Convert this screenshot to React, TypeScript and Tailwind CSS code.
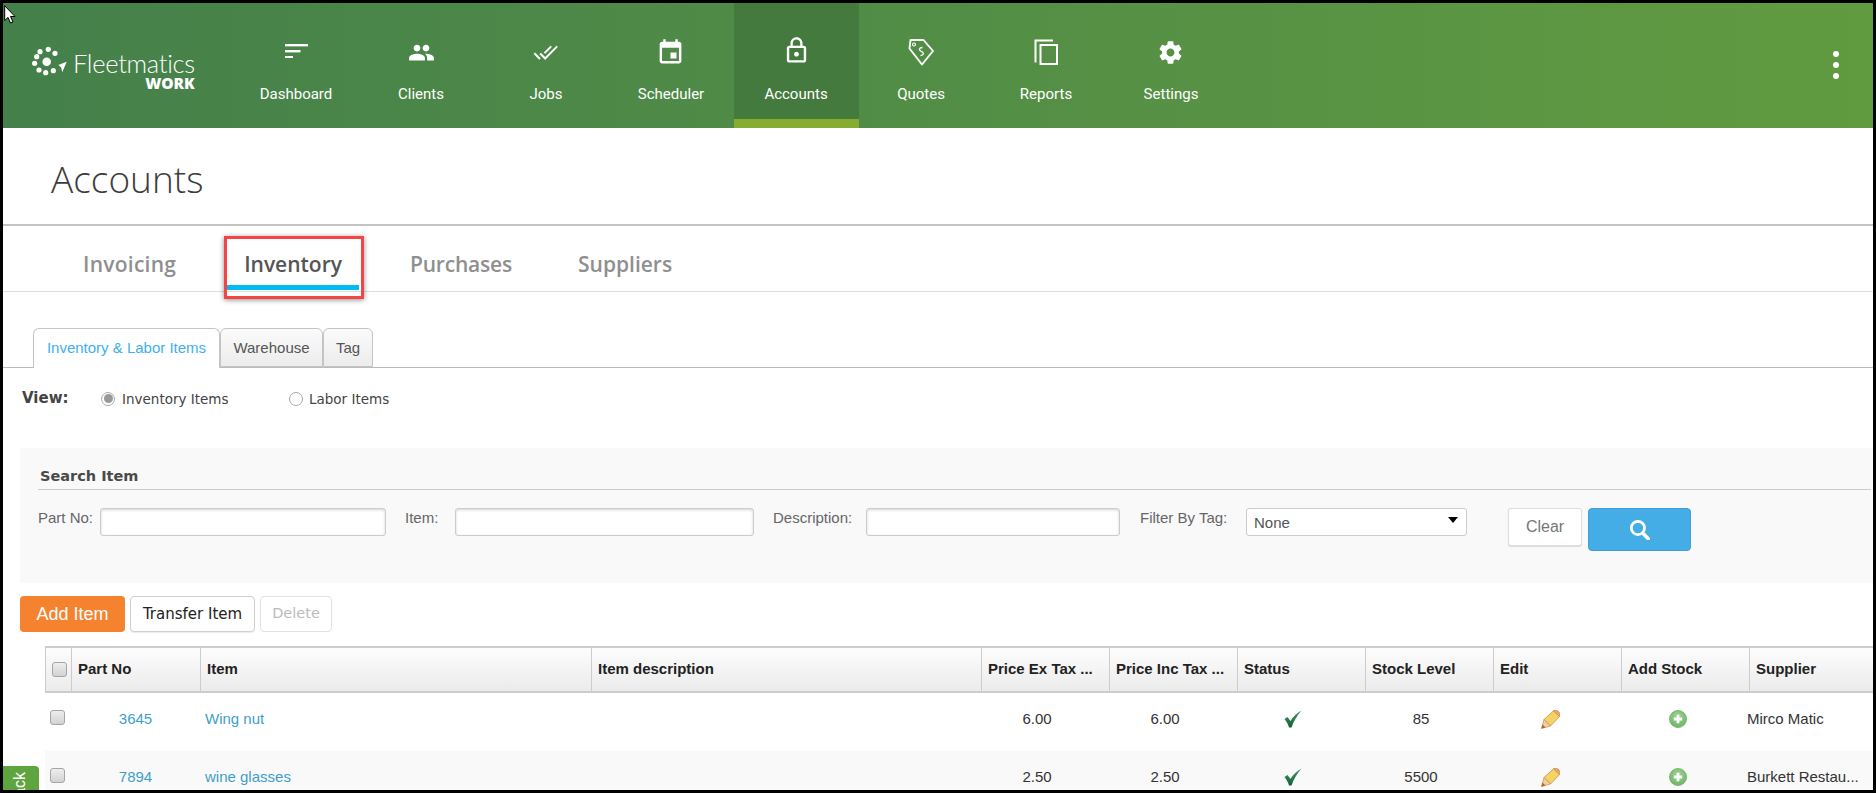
import React from "react";

const navItems = [
  { label: "Dashboard", icon: <SortIcon /> },
  { label: "Clients", icon: <PeopleIcon /> },
  { label: "Jobs", icon: <DoneIcon /> },
  { label: "Scheduler", icon: <CalendarIcon /> },
  { label: "Accounts", icon: <LockIcon />, active: true },
  { label: "Quotes", icon: <TagIcon /> },
  { label: "Reports", icon: <CopyIcon /> },
  { label: "Settings", icon: <GearIcon /> },
];

const gridCols = "grid grid-cols-[26px_129px_391px_390px_128px_128px_128px_128px_128px_128px_1fr]";

const headers = ["Part No", "Item", "Item description", "Price Ex Tax ...", "Price Inc Tax ...", "Status", "Stock Level", "Edit", "Add Stock", "Supplier"];

const rows = [
  { part: "3645", item: "Wing nut", ex: "6.00", inc: "6.00", stock: "85", supplier: "Mirco Matic" },
  { part: "7894", item: "wine glasses", ex: "2.50", inc: "2.50", stock: "5500", supplier: "Burkett Restau..." },
];

function SortIcon() {
  return (
    <svg viewBox="0 0 23 14" className="w-[23px] h-[14px] mb-[2px]" fill="white">
      <rect x="0" y="0" width="23" height="2.4" />
      <rect x="0" y="6" width="15.5" height="2.4" />
      <rect x="0" y="12" width="8" height="2.2" />
    </svg>
  );
}

function PeopleIcon() {
  return (
    <svg viewBox="0 0 24 24" className="w-[27px] h-[27px]" fill="white">
      <path d="M16 11c1.66 0 2.99-1.34 2.99-3S17.66 5 16 5c-1.66 0-3 1.34-3 3s1.34 3 3 3zm-8 0c1.66 0 2.99-1.34 2.99-3S9.66 5 8 5C6.34 5 5 6.34 5 8s1.34 3 3 3zm0 2c-2.33 0-7 1.17-7 3.5V19h14v-2.5c0-2.33-4.67-3.5-7-3.5zm8 0c-.29 0-.62.02-.97.05 1.16.84 1.97 1.97 1.97 3.45V19h6v-2.5c0-2.33-4.67-3.5-7-3.5z" />
    </svg>
  );
}

function DoneIcon() {
  return (
    <svg viewBox="0 0 24 24" className="w-[25px] h-[25px] -ml-[2px]" fill="white">
      <path d="M18.2 6.8l-1.4-1.4-6.5 6.5 1.4 1.4 6.5-6.5zm4.3-1.4L11.66 16.2 7.6 12.2l-1.4 1.4 5.46 5.5 12.2-12.3-1.36-1.4zM.6 13.5L6 18.9l1.4-1.4L2 12.1.6 13.5z" />
    </svg>
  );
}

function CalendarIcon() {
  return (
    <svg viewBox="0 0 24 24" className="w-[29px] h-[29px] -ml-[2px]" fill="white">
      <path d="M17 12h-5v5h5v-5zM16 1v2H8V1H6v2H5c-1.11 0-1.99.9-1.99 2L3 19c0 1.1.89 2 2 2h14c1.1 0 2-.9 2-2V5c0-1.1-.9-2-2-2h-1V1h-2zm3 18H5V8h14v11z" />
    </svg>
  );
}

function LockIcon() {
  return (
    <svg viewBox="0 0 24 24" className="w-[29px] h-[29px] mb-[4px]" fill="white">
      <path d="M12 17c1.1 0 2-.9 2-2s-.9-2-2-2-2 .9-2 2 .9 2 2 2zm6-9h-1V6c0-2.76-2.24-5-5-5S7 3.24 7 6v2H6c-1.1 0-2 .9-2 2v10c0 1.1.9 2 2 2h12c1.1 0 2-.9 2-2V10c0-1.1-.9-2-2-2zM8.9 6c0-1.71 1.39-3.1 3.1-3.1s3.1 1.39 3.1 3.1v2H8.9V6zM18 20H6V10h12v10z" />
    </svg>
  );
}

function TagIcon() {
  return (
    <svg viewBox="0 0 26 28" className="w-[26px] h-[28px]" fill="none" stroke="white" strokeWidth="1.9" strokeLinejoin="round">
      <path d="M2.5 2H15.5L25 13L14 26.5L1.5 10.5Z" />
      <circle cx="6" cy="6.5" r="1.5" strokeWidth="1.1" />
      <path d="M14.5 9.5C12 9.5 10.5 11 12 12.5L15 14.5C16 16 14.5 17.5 12.5 17.5" strokeWidth="1.3" />
    </svg>
  );
}

function CopyIcon() {
  return (
    <svg viewBox="0 0 24 26" className="w-[24px] h-[26px] -ml-[1px]" fill="none" stroke="white" strokeWidth="2">
      <path d="M1.5 23.5V1.5H19" />
      <rect x="6.5" y="6" width="16.5" height="19" />
    </svg>
  );
}

function GearIcon() {
  return (
    <svg viewBox="0 0 24 24" className="w-[27px] h-[27px] -ml-[2px]" fill="white">
      <path d="M19.43 12.98c.04-.32.07-.64.07-.98s-.03-.66-.07-.98l2.11-1.65c.19-.15.24-.42.12-.64l-2-3.46c-.12-.22-.39-.3-.61-.22l-2.49 1c-.52-.4-1.08-.73-1.69-.98l-.38-2.65C14.46 2.18 14.25 2 14 2h-4c-.25 0-.46.18-.49.42l-.38 2.65c-.61.25-1.17.59-1.69.98l-2.49-1c-.23-.09-.49 0-.61.22l-2 3.46c-.13.22-.07.49.12.64l2.11 1.65c-.04.32-.07.65-.07.98s.03.66.07.98l-2.11 1.65c-.19.15-.24.42-.12.64l2 3.46c.12.22.39.3.61.22l2.49-1c.52.4 1.08.73 1.69.98l.38 2.65c.03.24.24.42.49.42h4c.25 0 .46-.18.49-.42l.38-2.65c.61-.25 1.17-.59 1.69-.98l2.49 1c.23.09.49 0 .61-.22l2-3.46c.12-.22.07-.49-.12-.64l-2.11-1.65zM12 15.5c-1.93 0-3.5-1.57-3.5-3.5s1.57-3.5 3.5-3.5 3.5 1.57 3.5 3.5-1.57 3.5-3.5 3.5z" />
    </svg>
  );
}

function LogoMark() {
  const dots = [
    [8, 5.7], [16.3, 3.3], [23, 7.3], [4.7, 10.7], [2.6, 17.3], [7, 24], [13.7, 26.7], [21.3, 24.7],
  ];
  return (
    <svg viewBox="0 0 36 30" className="w-[36px] h-[30px] shrink-0" fill="white">
      {dots.map(([x, y], i) => (
        <circle key={i} cx={x} cy={y} r="2.6" />
      ))}
      <circle cx="14.7" cy="15.7" r="4.3" />
      <path d="M26.3 19L34.7 15.7L30.3 26.3L29 21.3Z" />
    </svg>
  );
}

function CheckMark() {
  return (
    <svg viewBox="0 0 18 18" className="w-[18px] h-[18px]">
      <defs>
        <linearGradient id="chk" x1="0" y1="0" x2="0" y2="1">
          <stop offset="0" stopColor="#4f9a6c" />
          <stop offset="1" stopColor="#0d6034" />
        </linearGradient>
      </defs>
      <path d="M0.5 9L3.5 7L6.5 11C9 6.5 13 3 17.5 0.5C13 6 9.5 11 7.5 17.5H5C4 14 2.5 11.5 0.5 9Z" fill="url(#chk)" />
    </svg>
  );
}

function PencilIcon() {
  return (
    <svg viewBox="0 0 19 19" className="w-[19px] h-[19px]">
      <path d="M3 9.5L12.5 0.8L18.5 6.5L9.5 16Z" fill="#f5d265" stroke="#d8a24d" strokeWidth="1" />
      <path d="M12.5 0.8C14.5 -0.2 17 0.5 18 2C19 3.5 19 5 18.5 6.5Z" fill="#e8a877" stroke="#c98a4b" strokeWidth="0.7" />
      <path d="M3 9.5L9.5 16L0.5 18.5Z" fill="#efcfa2" stroke="#c98a4b" strokeWidth="0.7" />
      <path d="M0.5 18.5L1.5 14.5L4.5 17.5Z" fill="#a9652c" />
    </svg>
  );
}

function PlusIcon() {
  return (
    <span className="flex h-[18px] w-[18px] items-center justify-center rounded-full border border-[#7ab573] bg-[radial-gradient(circle_at_50%_35%,#a3d596,#5fae5c)]">
      <svg viewBox="0 0 10 10" className="w-[10px] h-[10px]" fill="white">
        <path d="M3.6 0.8H6.4V3.6H9.2V6.4H6.4V9.2H3.6V6.4H0.8V3.6H3.6Z" />
      </svg>
    </span>
  );
}

function SearchGlyph() {
  return (
    <svg viewBox="0 0 20 20" className="h-[21px] w-[21px]" fill="none" stroke="white" strokeLinecap="round">
      <circle cx="8.5" cy="8.5" r="6.3" strokeWidth="2.6" />
      <path d="M13.2 13.5L18.3 18.8" strokeWidth="3.4" />
    </svg>
  );
}

function TableCheckbox({ className = "" }: { className?: string }) {
  return <span className={"block h-[15px] w-[15px] rounded-[3px] border border-[#a5a5a5] bg-linear-to-b from-[#eeeeee] to-[#d2d2d2] " + className} />;
}

function Radio({ checked = false }: { checked?: boolean }) {
  return (
    <span className="flex h-[14px] w-[14px] items-center justify-center rounded-full border border-[#aaaaaa] bg-white">
      {checked && <span className="h-[9px] w-[9px] rounded-full bg-[#999999]" />}
    </span>
  );
}

export default function App() {
  return (
    <div className="h-[793px] w-[1876px] overflow-hidden bg-black p-[3px] font-['Liberation_Sans',Arial,sans-serif]">
      <div className="relative h-[787px] w-[1870px] overflow-hidden bg-white">
        {/* top nav */}
        <header className="flex h-[125px] bg-linear-to-r from-[#44804a] to-[#619b40] text-white">
          <div className="w-[230.5px] shrink-0 pl-[29px] pt-[43px]">
            <div className="flex items-start">
              <LogoMark />
              <div className="ml-[5px] mt-[4px] flex flex-col items-end">
                <span className="font-['Lato',sans-serif] text-[25.5px] font-light leading-[26px] tracking-[-0.3px]">Fleetmatics</span>
                <span className="mt-[1px] font-['Open_Sans',sans-serif] text-[15.5px] font-extrabold leading-[13px]">WORK</span>
              </div>
            </div>
          </div>
          {navItems.map((n) => (
            <div key={n.label} className={"relative flex h-full w-[125px] shrink-0 flex-col items-center font-['Roboto',sans-serif] " + (n.active ? "bg-[#447a3e]" : "")}>
              <div className="flex h-[32px] w-full mt-[33px] items-center justify-center">{n.icon}</div>
              <span className="mt-[16px] text-[15px] leading-[20px]">{n.label}</span>
              {n.active && <span className="absolute bottom-0 left-0 h-[9px] w-full bg-[#86ad2f]" />}
            </div>
          ))}
          <div className="ml-auto mr-[34px] mt-[48px] flex flex-col gap-[5px]">
            <span className="h-[6px] w-[6px] rounded-full bg-white" />
            <span className="h-[6px] w-[6px] rounded-full bg-white" />
            <span className="h-[6px] w-[6px] rounded-full bg-white" />
          </div>
        </header>

        <div className="flex h-[98px] items-center border-b-2 border-[#c4c4c4] pl-[48px] pt-[4px]">
          <h1 className="font-['Open_Sans',sans-serif] text-[37px] font-light leading-none text-[#3c3c3c]">Accounts</h1>
        </div>

        {/* main tabs */}
        <div className="flex h-[66px] gap-[68px] border-b border-[#dddddd] pl-[80px] pt-[23px] font-['Open_Sans',sans-serif] text-[21px] font-semibold leading-[30px] text-[#8f8f8f]">
          <span className="tracking-[0.25px]">Invoicing</span>
          <span className="relative text-[#555555]">
            Inventory
            <span className="absolute -left-[17px] -right-[17px] top-[36px] h-[5px] bg-[#00bcf0]" />
            <span className="absolute -left-[20px] -right-[22px] -top-[13px] h-[63px] border-[3px] border-[#f44444] shadow-[0_1px_5px_rgba(0,0,0,0.45)]" />
          </span>
          <span className="tracking-[-0.2px]">Purchases</span>
          <span className="-ml-[2px]">Suppliers</span>
        </div>

        {/* sub tabs */}
        <div className="mt-[36px] flex h-[40px] border-b border-[#bbbbbb] pl-[30px] text-[15px] leading-[37px]">
          <span className="z-10 -mb-px h-[40px] w-[187px] rounded-t-[6px] border border-b-0 border-[#c4c4c4] bg-white text-center text-[#3fb0ee]">Inventory &amp; Labor Items</span>
          <span className="h-[39px] w-[103px] rounded-t-[6px] border border-[#c4c4c4] bg-linear-to-b from-[#fbfbfb] to-[#ececec] text-center text-[#555555]">Warehouse</span>
          <span className="h-[39px] w-[50px] rounded-t-[6px] border border-[#c4c4c4] bg-linear-to-b from-[#fbfbfb] to-[#ececec] text-center text-[#555555]">Tag</span>
        </div>

        <div className="flex h-[61px] items-center pl-[19px] font-['DejaVu_Sans',sans-serif] text-[14px] text-[#444444]">
          <span className="w-[79px] text-[15px] font-bold">View:</span>
          <Radio checked />
          <span className="ml-[7px] mt-[1px] w-[167px] text-[13.5px]">Inventory Items</span>
          <Radio />
          <span className="ml-[6px] mt-[1px] text-[13.5px]">Labor Items</span>
        </div>

        {/* search panel */}
        <section className="ml-[17px] mt-[19px] h-[135px] bg-[#f9f9f9] pl-[18px] pr-[2px]">
          <div className="border-b border-[#cccccc] pb-[3px] pl-[2px] pt-[18px] font-['DejaVu_Sans',sans-serif] text-[14.5px] font-bold leading-[20px] text-[#4a4a4a]">Search Item</div>
          <div className="mt-[18px] flex items-start text-[15px] text-[#666666]">
            <label className="w-[62px] leading-[20px]">Part No:</label>
            <input className="h-[28px] w-[286px] rounded-[3px] border border-[#cccccc] bg-white shadow-[inset_0_1px_3px_rgba(0,0,0,0.18)]" />
            <label className="ml-[19px] w-[50px] leading-[20px]">Item:</label>
            <input className="h-[28px] w-[299px] rounded-[3px] border border-[#cccccc] bg-white shadow-[inset_0_1px_3px_rgba(0,0,0,0.18)]" />
            <label className="ml-[19px] w-[93px] leading-[20px]">Description:</label>
            <input className="h-[28px] w-[254px] rounded-[3px] border border-[#cccccc] bg-white shadow-[inset_0_1px_3px_rgba(0,0,0,0.18)]" />
            <label className="ml-[20px] w-[106px] leading-[20px]">Filter By Tag:</label>
            <div className="flex h-[28px] w-[221px] items-center justify-between rounded-[3px] border border-[#cccccc] bg-white pl-[7px] pr-[8px] text-[#555555]">
              <span className="mt-[3px]">None</span>
              <span className="-mt-[4px] h-0 w-0 border-x-[5px] border-t-[6px] border-x-transparent border-t-black" />
            </div>
            <button className="ml-[41px] h-[38px] w-[74px] rounded-[3px] border border-[#dddddd] bg-white text-[16px] text-[#777777] shadow-[0_1px_1px_rgba(0,0,0,0.12)]">Clear</button>
            <button className="ml-[6px] flex h-[43px] w-[103px] items-center justify-center rounded-[4px] border border-[#3f9fd6] bg-[#45ade6]">
              <SearchGlyph />
            </button>
          </div>
        </section>

        {/* action buttons */}
        <div className="ml-[17px] mt-[13px] flex gap-[5px]">
          <button className="h-[36px] w-[105px] rounded-[4px] bg-[#f5822f] text-[18px] text-white">Add Item</button>
          <button className="h-[36px] w-[125px] rounded-[4px] border border-[#cfcfcf] bg-white font-['DejaVu_Sans',sans-serif] text-[15px] text-[#222222] shadow-[0_1px_1px_rgba(0,0,0,0.08)]">Transfer Item</button>
          <button className="h-[36px] w-[72px] rounded-[4px] border border-[#e2e2e2] bg-white font-['DejaVu_Sans',sans-serif] text-[14.5px] text-[#bbbbbb]">Delete</button>
        </div>

        {/* table */}
        <div className="ml-[42px] mt-[14px]">
          <div className={gridCols + " h-[47px] border-y-2 border-[#cccccc] bg-linear-to-b from-[#fdfdfd] to-[#ebebeb] text-[15px] font-bold leading-[41px] text-[#222222]"}>
            <div className="flex items-center border-l border-[#cccccc] pl-[6px]">
              <TableCheckbox />
            </div>
            {headers.map((h) => (
              <div key={h} className="truncate border-l border-[#cccccc] pl-[6px]">
                {h}
              </div>
            ))}
          </div>
          {rows.map((r, i) => (
            <div key={r.part} className={gridCols + " h-[58px] items-center pb-[6px] text-[15px] text-[#333333] " + (i % 2 ? "bg-[#f9f9f9]" : "bg-white")}>
              <div className="pl-[5px]">
                <TableCheckbox className="-mt-[3px]" />
              </div>
              <div className="text-center text-[#3f9fc8]">{r.part}</div>
              <div className="pl-[5px] text-[#3f9fc8]">{r.item}</div>
              <div />
              <div className="pr-[16px] text-center">{r.ex}</div>
              <div className="pr-[16px] text-center">{r.inc}</div>
              <div className="flex justify-center pr-[16px]">
                <CheckMark />
              </div>
              <div className="pr-[16px] text-center">{r.stock}</div>
              <div className="flex justify-center pr-[13px]">
                <PencilIcon />
              </div>
              <div className="flex justify-center pr-[14px]">
                <PlusIcon />
              </div>
              <div className="-ml-[2px] whitespace-nowrap">{r.supplier}</div>
            </div>
          ))}
        </div>

        {/* feedback tab, clipped by the window edge */}
        <div className="absolute bottom-0 left-0 h-[24px] w-[36px] overflow-hidden rounded-tr-[4px] bg-[#5ea53f]">
          <span className="absolute left-[7px] top-[6px] rotate-180 whitespace-nowrap text-[16px] leading-[20px] text-white [writing-mode:vertical-rl]">
            Feedback
          </span>
        </div>

        {/* mouse pointer from the capture */}
        <svg viewBox="0 0 12 19" className="absolute left-[1px] top-[2px] h-[19px] w-[12px]">
          <path d="M0.7 0.7V15.5L4 12.4L6.5 18L9 17L6.5 11.5H11Z" fill="white" stroke="black" strokeWidth="1" />
        </svg>
      </div>
    </div>
  );
}
